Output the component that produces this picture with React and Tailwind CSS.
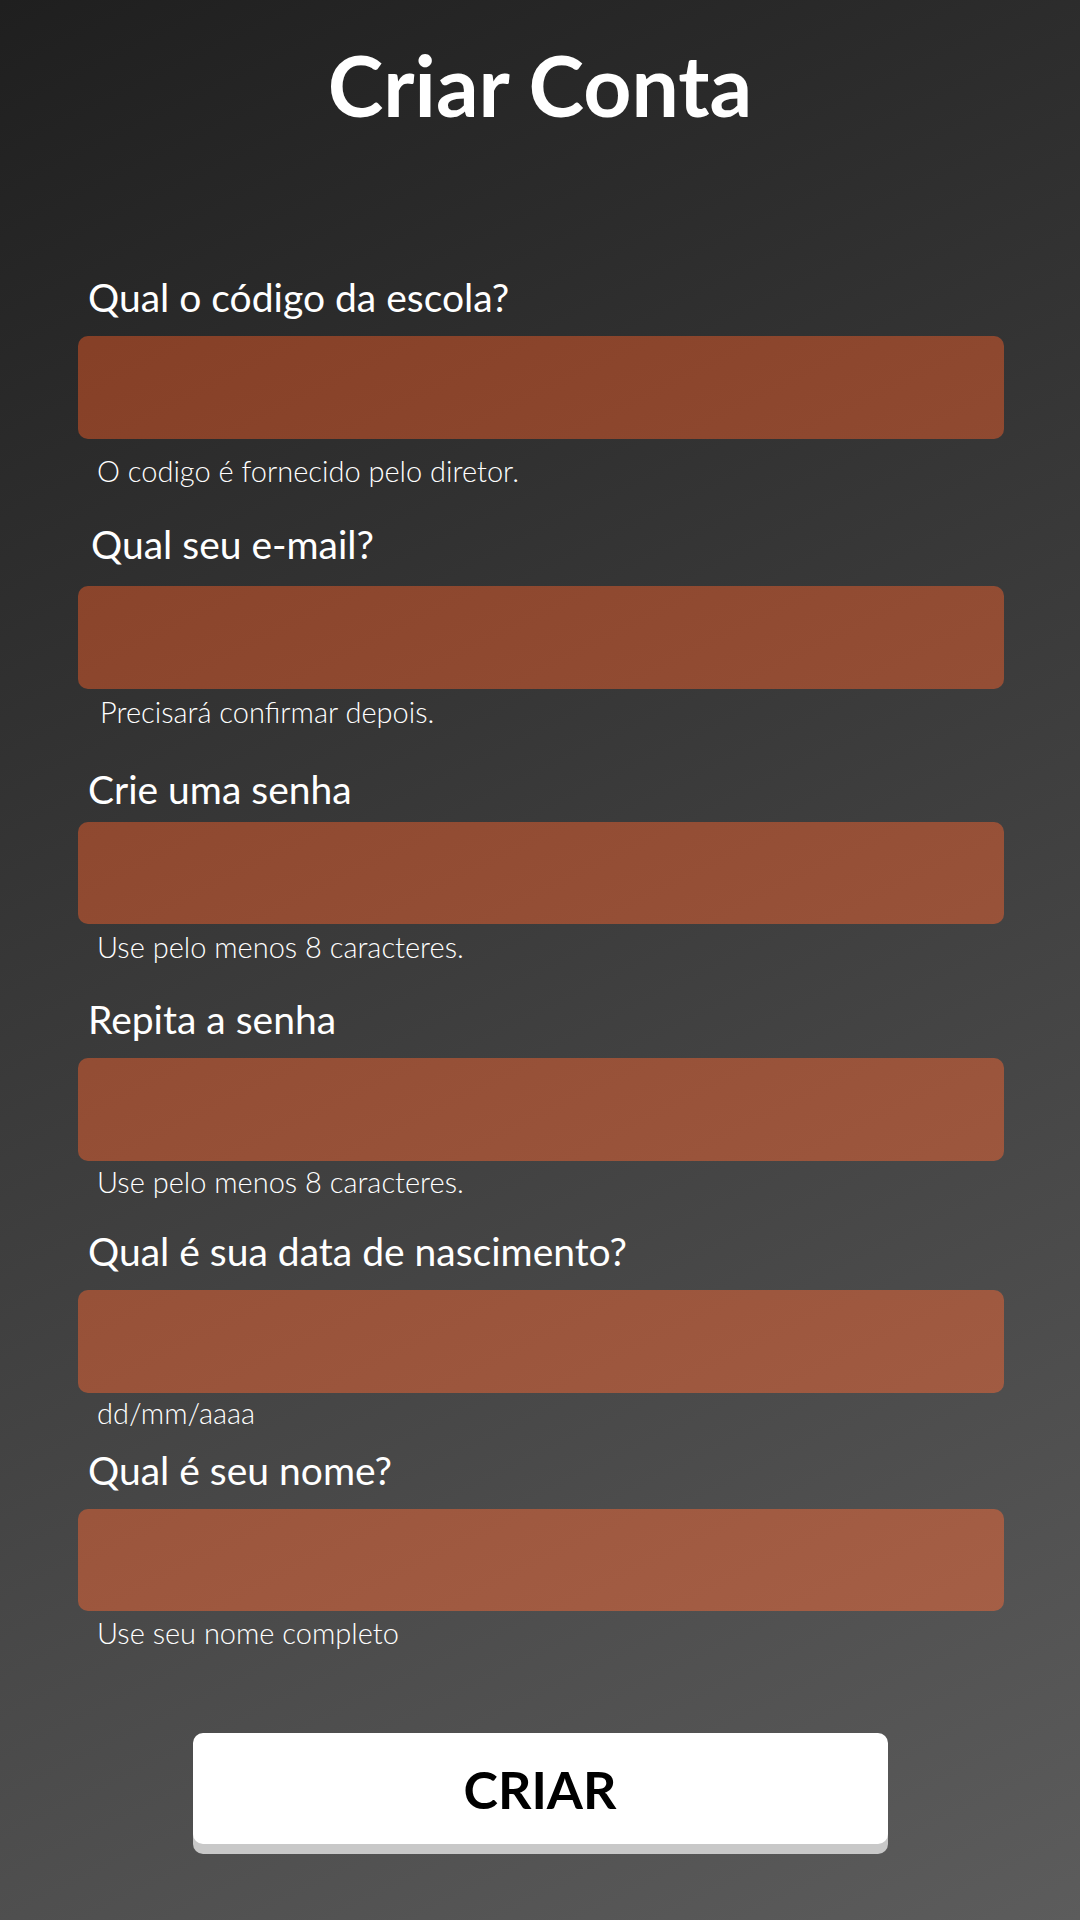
import React from "react";

const fields = [
  {
    label: "Qual o código da escola?",
    hint: "O codigo é fornecido pelo diretor.",
    lcls: "mt-[151px] pl-[88px]",
    bcls: "mt-[19px] h-[103px]",
    hcls: "mt-[17px] pl-[97px]",
  },
  {
    label: "Qual seu e-mail?",
    hint: "Precisará confirmar depois.",
    lcls: "mt-[40px] pl-[91px]",
    bcls: "mt-[22px] h-[103px]",
    hcls: "mt-[8px] pl-[100px]",
  },
  {
    label: "Crie uma senha",
    hint: "Use pelo menos 8 caracteres.",
    lcls: "mt-[44px] pl-[88px]",
    bcls: "mt-[13px] h-[102px]",
    hcls: "mt-[8px] pl-[97px]",
  },
  {
    label: "Repita a senha",
    hint: "Use pelo menos 8 caracteres.",
    lcls: "mt-[39px] pl-[88px]",
    bcls: "mt-[19px] h-[103px]",
    hcls: "mt-[6px] pl-[97px]",
  },
  {
    label: "Qual é sua data de nascimento?",
    hint: "dd/mm/aaaa",
    lcls: "mt-[36px] pl-[88px]",
    bcls: "mt-[19px] h-[103px]",
    hcls: "mt-[5px] pl-[97px]",
  },
  {
    label: "Qual é seu nome?",
    hint: "Use seu nome completo",
    lcls: "mt-[24px] pl-[88px]",
    bcls: "mt-[19px] h-[102px]",
    hcls: "mt-[7px] pl-[97px]",
  },
];

export default function App() {
  return (
    <div className="w-[1080px] h-[1920px] overflow-hidden bg-[linear-gradient(154deg,#1f1f1f,#5c5c5c)] font-['Lato',sans-serif] text-white flex flex-col">
      <h1 className="mt-[43px] text-center text-[84px] leading-[84px] font-bold">
        Criar Conta
      </h1>
      {fields.map((f, i) => (
        <div key={i} className="flex flex-col">
          <div className={`${f.lcls} text-[39px] leading-[39px] font-normal`}>
            {f.label}
          </div>
          <div
            className={`${f.bcls} ml-[78px] w-[926px] rounded-[10px] bg-[linear-gradient(154deg,#7f3920,#ab654c)] bg-fixed`}
          />
          <div className={`${f.hcls} text-[29px] leading-[29px] font-light text-white`}>
            {f.hint}
          </div>
        </div>
      ))}
      <div className="mt-[86px] flex justify-center">
        <button className="w-[695px] h-[111px] rounded-[10px] bg-white shadow-[0_10px_0_#c8c8c8] flex items-center justify-center text-black text-[52px] font-bold leading-none">
          CRIAR
        </button>
      </div>
    </div>
  );
}
